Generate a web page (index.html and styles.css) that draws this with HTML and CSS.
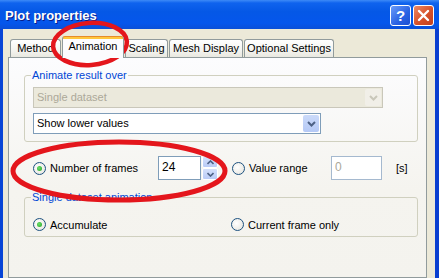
FILE: index.html
```html
<!DOCTYPE html>
<html lang="en">
<head>
    <meta charset="UTF-8">
    <meta name="viewport" content="width=device-width, initial-scale=1.0">
    <title>Plot properties</title>
    <link rel="stylesheet" href="styles.css">
</head>
<body>
    <div class="window">
        <div class="titlebar">
            <span class="title">Plot properties</span>
            <div class="caption-buttons">
                <div class="cap-btn help">?</div>
                <div class="cap-btn close">
                    <svg width="13" height="13" viewBox="0 0 13 13"><path d="M2 2 L11 11 M11 2 L2 11" stroke="#fff" stroke-width="2.4" stroke-linecap="round"/></svg>
                </div>
            </div>
        </div>
        <div class="frame">
            <div class="client">
                <div class="tabs">
                    <div class="tab w-method">Method</div>
                    <div class="tab selected w-anim">Animation</div>
                    <div class="tab w-scaling">Scaling</div>
                    <div class="tab w-mesh">Mesh Display</div>
                    <div class="tab w-opt">Optional Settings</div>
                </div>
                <div class="panel">
                    <fieldset class="group group-first">
                        <legend>Animate result over</legend>
                        <div class="combo disabled wide">
                            <span class="value">Single dataset</span>
                            <span class="drop">
                                <svg width="9" height="6" viewBox="0 0 9 6"><polyline points="1,1 4.5,4.5 8,1" fill="none" stroke="#c9c7ba" stroke-width="2"/></svg>
                            </span>
                        </div>
                        <div class="combo narrow">
                            <span class="value">Show lower values</span>
                            <span class="drop">
                                <svg width="9" height="6" viewBox="0 0 9 6"><polyline points="1,1 4.5,4.5 8,1" fill="none" stroke="#4d6185" stroke-width="2"/></svg>
                            </span>
                        </div>
                    </fieldset>

                    <div class="frames-row">
                        <label class="radio opt-frames"><span class="dot checked"></span>Number of frames</label>
                        <div class="spin">
                            <span class="edit edit-frames">24</span>
                            <span class="spin-btns">
                                <span class="spin-btn"><svg width="7" height="5" viewBox="0 0 7 5"><polyline points="0.5,4 3.5,1 6.5,4" fill="none" stroke="#4d6185" stroke-width="1.6"/></svg></span>
                                <span class="spin-btn"><svg width="7" height="5" viewBox="0 0 7 5"><polyline points="0.5,1 3.5,4 6.5,1" fill="none" stroke="#4d6185" stroke-width="1.6"/></svg></span>
                            </span>
                        </div>
                        <label class="radio opt-range"><span class="dot"></span>Value range</label>
                        <span class="edit edit-range">0</span>
                        <span class="unit">[s]</span>
                    </div>

                    <fieldset class="group group-second">
                        <legend>Single dataset animation</legend>
                        <div class="radio-row">
                            <label class="radio"><span class="dot checked"></span>Accumulate</label>
                            <label class="radio"><span class="dot"></span>Current frame only</label>
                        </div>
                    </fieldset>
                </div>
            </div>
        </div>

        <!-- annotation marks drawn over the dialog -->
        <svg class="marks" width="439" height="278" viewBox="0 0 439 278">
            <ellipse cx="90" cy="44" rx="37" ry="21" fill="none" stroke="#e4161c" stroke-width="4.5" transform="rotate(-4 90 44)"/>
            <ellipse cx="119" cy="171" rx="106" ry="29" fill="none" stroke="#e4161c" stroke-width="5"/>
        </svg>
    </div>
</body>
</html>
```

FILE: styles.css
```css
body {
    margin: 0;
    font-family: "Liberation Sans", Arial, sans-serif;
    font-size: 11px;
    color: #000;
    background-color: #ece9d8;
}
.window {
    position: relative;
    width: 439px;
    height: 278px;
    overflow: hidden;
    display: flex;
    flex-direction: column;
}
.titlebar {
    height: 29px;
    display: flex;
    align-items: center;
    justify-content: space-between;
    padding: 0 5px 0 5px;
    background: linear-gradient(#3d8af7 0, #0f63ee 3px, #0558e6 40%, #0556ec 80%, #0a4fd8 100%);
}
.title {
    color: #fff;
    font-weight: bold;
    font-size: 13px;
    text-shadow: 1px 1px #0a1d8a;
    margin-top: 2px;
}
.caption-buttons {
    display: flex;
    gap: 2px;
    margin-top: 2px;
}
.cap-btn {
    width: 19px;
    height: 19px;
    border: 1px solid #fff;
    border-radius: 3px;
    display: flex;
    align-items: center;
    justify-content: center;
    color: #fff;
    font-weight: bold;
    font-size: 15px;
}
.help {
    background: linear-gradient(135deg, #6a9cf9, #2a62e3 60%, #1d4fd2);
}
.close {
    background: linear-gradient(135deg, #ec8a66, #d7512a 55%, #c2401e);
}
.frame {
    flex: 1;
    display: flex;
    border-left: 3px solid #0845d6;
    border-right: 4px solid #0a3fd0;
}
.client {
    flex: 1;
    display: flex;
    flex-direction: column;
    padding: 7px 8px 0 5px;
    background-color: #ece9d8;
}
.tabs {
    display: flex;
    align-items: flex-end;
    gap: 1px;
    padding-left: 2px;
    height: 21px;
}
.tab {
    height: 17px;
    line-height: 17px;
    text-align: center;
    border: 1px solid #919b9c;
    border-bottom: none;
    border-radius: 3px 3px 0 0;
    background: linear-gradient(#ffffff, #f4f4f0 60%, #e9e8e0);
    white-space: nowrap;
}
.tab.selected {
    height: 21px;
    line-height: 19px;
    margin-bottom: -1px;
    z-index: 1;
    border-top-color: #e68b2c;
    background: linear-gradient(#ffc73c 0, #ffc73c 2px, #fcfcfe 2px);
}
.w-method { width: 49px; }
.w-anim { width: 60px; }
.w-scaling { width: 41px; }
.w-mesh { width: 72px; }
.w-opt { width: 88px; }
.panel {
    flex: 1;
    border: 1px solid #919b9c;
    background: linear-gradient(#fcfcfe, #f5f4ef 60%, #f4f3ee);
    padding-top: 11px;
}
.group {
    margin: 0 8px 0 15px;
    border: 1px solid #d0d0bf;
    border-radius: 3px;
    padding: 0 7px 0 8px;
}
.group legend {
    color: #0046d5;
    line-height: 13px;
    padding: 0 1px;
    margin-left: -2px;
}
.group-first {
    padding-bottom: 7px;
}
.combo {
    display: flex;
    height: 21px;
    box-sizing: border-box;
    border: 1px solid #7f9db9;
    background-color: #fff;
}
.combo.wide {
    width: 350px;
    margin-top: 5px;
}
.combo.narrow {
    width: 288px;
    margin-top: 5px;
}
.combo .value {
    flex: 1;
    padding-left: 3px;
    line-height: 19px;
}
.combo .drop {
    width: 16px;
    margin: 1px;
    border-radius: 2px;
    display: flex;
    align-items: center;
    justify-content: center;
    background: linear-gradient(#cbdaf9, #b5c9f6);
}
.combo.disabled {
    border-color: #c9c7ba;
    background-color: #ebe9dc;
    color: #aca899;
}
.combo.disabled .drop {
    background: #f1efe8;
}
.frames-row {
    display: flex;
    align-items: center;
    margin: 14px 0 11px 24px;
    height: 24px;
}
.radio {
    display: flex;
    align-items: center;
    gap: 4px;
    white-space: nowrap;
}
.dot {
    width: 11px;
    height: 11px;
    border: 1px solid #1c5180;
    border-radius: 50%;
    background: radial-gradient(circle at 40% 40%, #ffffff, #e3e2da);
    display: flex;
    align-items: center;
    justify-content: center;
}
.dot.checked::after {
    content: "";
    width: 5px;
    height: 5px;
    border-radius: 50%;
    background: radial-gradient(circle at 40% 40%, #6ce06c, #21a121);
}
.opt-frames { width: 125px; }
.spin {
    display: flex;
    height: 24px;
}
.edit {
    box-sizing: border-box;
    height: 24px;
    border: 1px solid #7f9db9;
    background-color: #fff;
    padding-left: 3px;
    line-height: 20px;
    font-size: 12px;
}
.edit-frames { width: 43px; }
.spin-btns {
    display: flex;
    flex-direction: column;
    width: 16px;
    margin-left: 1px;
}
.spin-btn {
    flex: 1;
    display: flex;
    align-items: center;
    justify-content: center;
    border: 1px solid #fff;
    border-radius: 2px;
    background: linear-gradient(#d4e0fb, #b9cbf6);
}
.opt-range {
    margin-left: 14px;
    width: 99px;
}
.edit-range {
    width: 51px;
    color: #aca899;
    border-color: #a5b9cf;
}
.unit {
    margin-left: 14px;
}
.group-second {
    padding-bottom: 5px;
}
.radio-row {
    display: grid;
    grid-template-columns: 198px auto;
    margin-top: 14px;
}
.marks {
    position: absolute;
    left: 0;
    top: 0;
    pointer-events: none;
}
```
